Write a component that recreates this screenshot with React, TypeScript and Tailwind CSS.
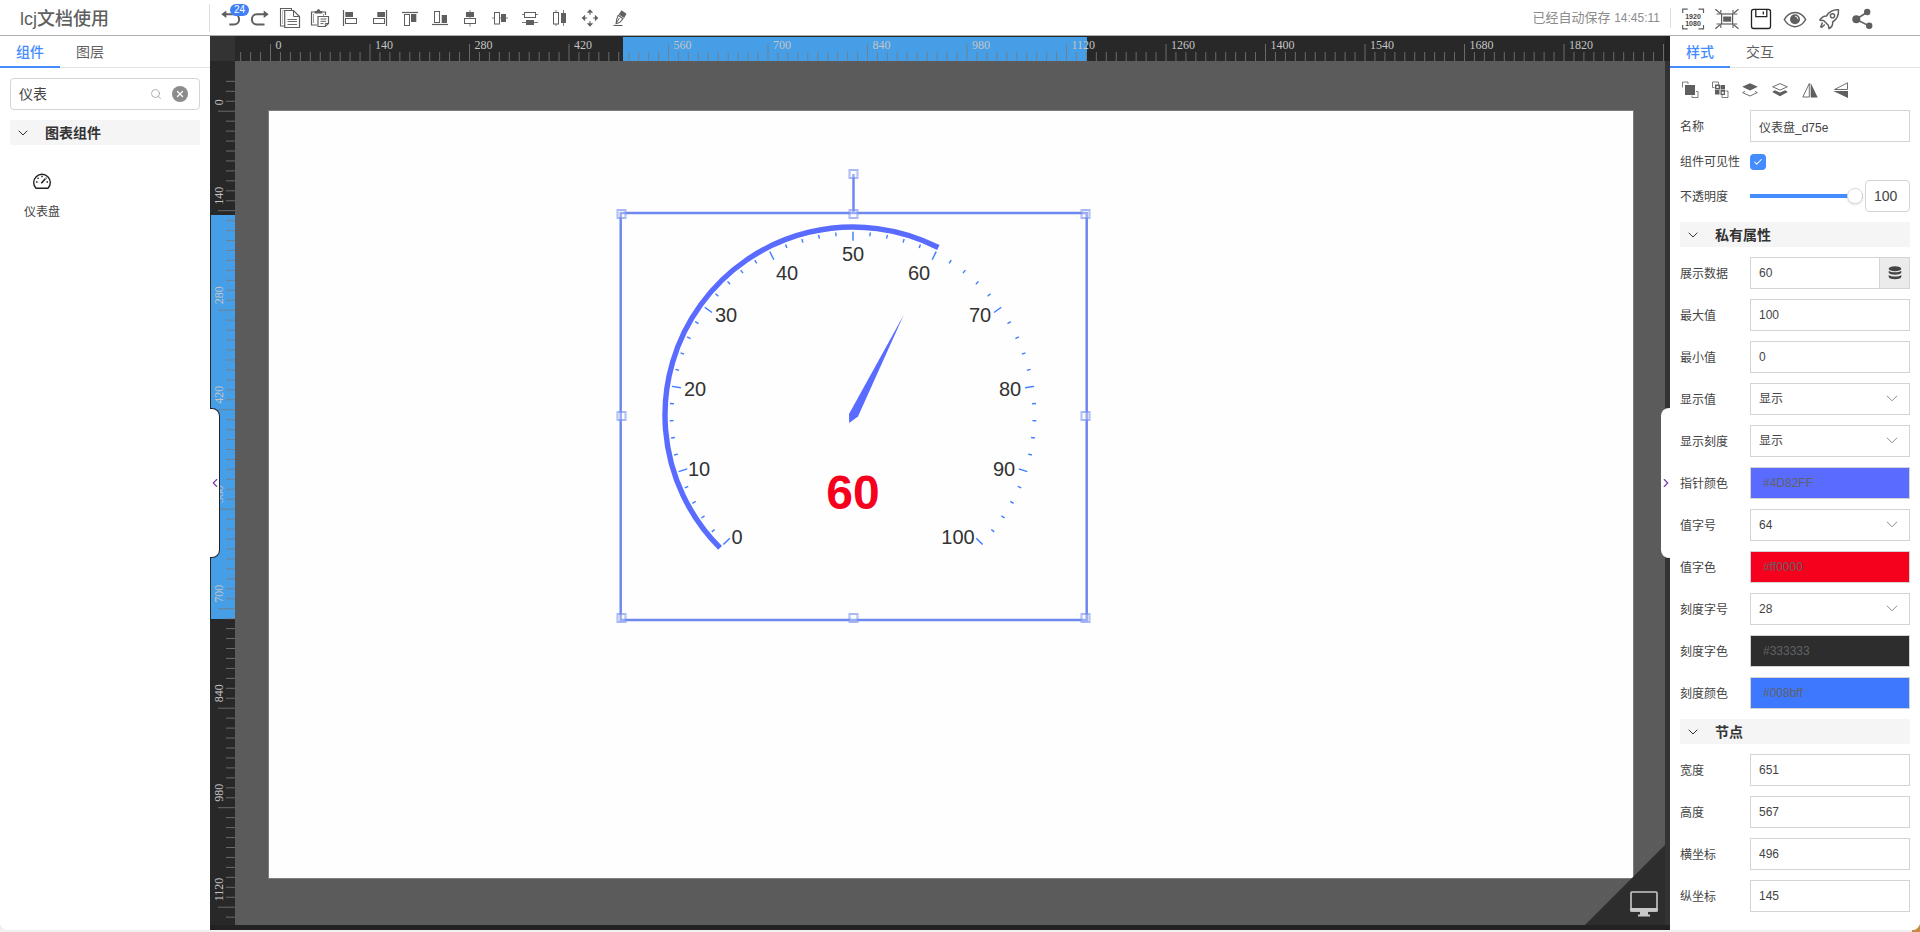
import React, { useState } from "react";
import { Check, ChevronDown, ChevronLeft, ChevronRight, Search, X } from "lucide-react";

const INK = "#5f5f5f";

interface IconProps {
  children: React.ReactNode;
}

/* ---------- toolbar icons, drawn on a 30x35 cell ---------- */

const ToolIcon: React.FC<IconProps> = ({ children }) => (
  <svg width="30" height="35" viewBox="0 0 30 35" fill="none" stroke={INK} strokeWidth="1">
    {children}
  </svg>
);

const tools = [
  {
    label: "撤销",
    icon: (
      <>
        <path d="M9 14.3h10a5 5 0 0 1 0 10.2h-4.7" strokeWidth="2" />
        <path d="M6.3 14.3l5-3.8v7.6z" fill={INK} stroke="none" />
      </>
    ),
  },
  {
    label: "重做",
    icon: (
      <>
        <path d="M21 14.3h-9a5 5 0 0 0 0 10.2h7.5" strokeWidth="2" />
        <path d="M23.7 14.3l-5-3.8v7.6z" fill={INK} stroke="none" />
      </>
    ),
  },
  {
    label: "复制",
    icon: (
      <>
        <path d="M16.5 10.5V8.5h-11v17.500h4" strokeWidth="1.1" />
        <path d="M7.5 24V10.500h2" strokeWidth="0.4" />
        <path d="M9.700 10.5h8.800l6 6v11h-14.800z" strokeWidth="1.2" />
        <path d="M18.5 10.5v6h6" />
        <path d="M12.500 19.500h9.500M12.500 21.500h9.500M12.500 24.500h9.500" strokeWidth="0.9" />
      </>
    ),
  },
  {
    label: "粘贴",
    icon: (
      <>
        <path d="M12 25H6.5V12h3M17.5 12h3v3" strokeWidth="1.2" />
        <path d="M8.5 23V14M18.5 14v2" strokeWidth="0.6" />
        <path d="M9.5 11h2.2c.2-2.4 3.4-2.4 3.6 0h2.2v2.5h-8z" fill={INK} stroke="none" />
        <path d="M13 16.5h10.5v7l-3.2 3H13z" strokeWidth="1.2" />
        <path d="M15.5 19h6M15.5 21.3h5.5M15.5 23.6h3M23.5 23.5h-3.2v3" />
      </>
    ),
  },
  {
    label: "左对齐",
    icon: (
      <>
        <path d="M8.5 10v16" strokeWidth="1.2" />
        <rect x="10.3" y="12" width="7.7" height="5" fill={INK} stroke="none" />
        <rect x="10.5" y="18.5" width="11" height="5" />
      </>
    ),
  },
  {
    label: "右对齐",
    icon: (
      <>
        <path d="M21.5 10v16" strokeWidth="1.2" />
        <rect x="12.3" y="12" width="7.7" height="5" fill={INK} stroke="none" />
        <rect x="8.5" y="18.5" width="11" height="5" />
      </>
    ),
  },
  {
    label: "顶部对齐",
    icon: (
      <>
        <path d="M7 12.5h16" strokeWidth="1.2" />
        <rect x="9.5" y="14.5" width="5" height="11" />
        <rect x="16" y="14" width="5.3" height="8" fill={INK} stroke="none" />
      </>
    ),
  },
  {
    label: "底部对齐",
    icon: (
      <>
        <path d="M7 24.5h16" strokeWidth="1.2" />
        <rect x="9.5" y="11.5" width="5" height="11" />
        <rect x="16.7" y="15" width="5.3" height="8" fill={INK} stroke="none" />
      </>
    ),
  },
  {
    label: "水平居中",
    icon: (
      <>
        <path d="M15 10v8M15 24v2.5" strokeWidth="0.8" />
        <rect x="11" y="12" width="8" height="5" fill={INK} stroke="none" />
        <rect x="9.5" y="18.5" width="11" height="5" />
      </>
    ),
  },
  {
    label: "垂直居中",
    icon: (
      <>
        <path d="M7 18h2.5M14.5 18H23" strokeWidth="0.8" />
        <rect x="9.5" y="12.5" width="5" height="11.5" />
        <rect x="16" y="14" width="5" height="8" fill={INK} stroke="none" />
      </>
    ),
  },
  {
    label: "垂直分布",
    icon: (
      <>
        <path d="M7 14.5h2.5M20.5 14.5H23M7 22.5h16" strokeWidth="0.8" />
        <rect x="9.5" y="12.5" width="11" height="5" />
        <rect x="11" y="20" width="8" height="5" fill={INK} stroke="none" />
      </>
    ),
  },
  {
    label: "水平分布",
    icon: (
      <>
        <path d="M11 10v2M11 24v2M18.5 10v16" strokeWidth="0.8" />
        <rect x="8.5" y="12.5" width="5" height="11.5" />
        <rect x="16" y="13" width="5" height="10" fill={INK} stroke="none" />
      </>
    ),
  },
  {
    label: "移动",
    icon: (
      <>
        <path d="M15 9.3l3.2 3.4h-6.4zM15 26.7l3.2-3.4h-6.4zM6.7 18l3.4-3.2v6.4zM23.3 18l-3.4-3.2v6.4z" fill={INK} stroke="none" />
        <path d="M15 12.5v2.2M15 21.3v2.2M10 18h2M18 18h2" strokeWidth="1.2" />
      </>
    ),
  },
  {
    label: "清空画布",
    icon: (
      <>
        <path d="M16.5 10.2l5 3.6-2.3 4.3-5.4-3.6z" fill={INK} stroke="none" />
        <path d="M13.2 15.3l4.8 3.4-3 3.7-3.8 1.2.4-4z" strokeWidth="1.1" />
        <path d="M14.5 18l-3.5 5.5M8.5 25.5h9" />
      </>
    ),
  },
];

/* ---------- icons on the right of the header, 34x35 cell ---------- */

const HeaderIcon: React.FC<IconProps> = ({ children }) => (
  <svg width="34" height="35" viewBox="0 0 34 35" fill="none" stroke={INK} strokeWidth="1.2">
    {children}
  </svg>
);

const actions = [
  {
    label: "画布尺寸",
    icon: (
      <>
        <path d="M6.7 13V9.2h5M22.5 9.2h5V13M6.7 25v3.8h5M22.5 28.8h5V25" />
        <g fill="#444" stroke="none" fontFamily="Liberation Sans, sans-serif" fontSize="7" fontWeight="bold" textAnchor="middle">
          <text x="17" y="18.5">1920</text>
          <text x="17" y="26">1080</text>
        </g>
      </>
    ),
  },
  {
    label: "适应屏幕",
    icon: (
      <>
        <rect x="11.6" y="14" width="11" height="10" />
        <rect x="13.2" y="16.5" width="8" height="5.2" fill={INK} stroke="none" />
        <path d="M5.3 9.2l4.8 4M28.5 9.2l-4.8 4M5.3 28.8l4.8-4M28.5 28.8l-4.8-4" />
        <path d="M10.8 10v4H6.5M23 10v4h4.3M10.8 28v-4H6.5M23 28v-4h4.3" strokeWidth="1.1" />
      </>
    ),
  },
  {
    label: "保存",
    icon: (
      <g stroke="#222" strokeWidth="1.3">
        <rect x="7.5" y="9.3" width="19" height="19.2" rx="2.2" />
        <path d="M11.8 9.5v7.2h11V9.5M19.3 11.5v3" />
      </g>
    ),
  },
  {
    label: "预览",
    icon: (
      <>
        <path d="M6.3 19.5C11.5 10 22.5 10 27.7 19.5C22.5 29 11.5 29 6.3 19.5z" strokeWidth="1.5" />
        <circle cx="17" cy="19.2" r="5" fill={INK} stroke="none" />
        <path d="M17 16.2a3 3 0 0 1 3 3" stroke="#fff" strokeWidth="0.9" />
      </>
    ),
  },
  {
    label: "发布",
    icon: (
      <>
        <path
          d="M26.5 9.8c-6-.4-9.5 2-12 6.2-2.6-.1-5 1.2-6.6 4.2l3.7.3 4.7 4.700.7 3.500c3-1.700 4-4 3.700-6.700 4-2.500 6.200-6 5.800-12.200z"
          strokeWidth="1.5"
          strokeLinejoin="round"
        />
        <circle cx="20.5" cy="15.8" r="2.1" strokeWidth="1.4" />
        <path d="M10.5 22.5l-2 5M12.8 24.5l-3.6 3.2" strokeWidth="1.5" />
      </>
    ),
  },
  {
    label: "分享",
    icon: (
      <>
        <path d="M10.5 19l11-7M10.5 19.5l12.5 6.3" strokeWidth="1.5" />
        <g fill={INK} stroke="none">
          <circle cx="10.3" cy="19.3" r="4" />
          <circle cx="21.2" cy="12" r="3.2" />
          <circle cx="23.2" cy="25.7" r="3.2" />
        </g>
      </>
    ),
  },
];

/* ---------- arrange icons in the style tab, 30x42 cell ---------- */

const arranges = [
  {
    label: "组合",
    icon: (
      <>
        <rect x="10" y="17" width="10" height="10" fill={INK} stroke="none" />
        <path d="M7.5 19.5V14H13v2M21 23.5h2v6h-6v-2" strokeWidth="0.8" />
      </>
    ),
  },
  {
    label: "取消组合",
    icon: (
      <>
        <path d="M10 16.5h5v5h-5zM15.5 17H20v4.5h-4.5zM10 22h4.5v4.5H10z" fill={INK} stroke="none" />
        <path d="M15.5 22H20v5h-4.5z" fill={INK} stroke="none" />
        <path d="M11.5 18h2v2h-2zM16.8 23.8h2v2h-2z" fill="#fff" stroke="none" />
        <path d="M7.5 19.5V14h6v2.500M7.5 19.5h2M20.5 23H23v6.5h-6V27" strokeWidth="0.8" />
      </>
    ),
  },
  {
    label: "置顶",
    icon: (
      <>
        <path d="M15 15.3l7.8 3.5-7.8 3.7-7.8-3.7z" fill={INK} stroke="none" />
        <path d="M10 23.3l-2.3 1.3L15 28l7.3-3.4-2.3-1.3" strokeWidth="0.9" />
      </>
    ),
  },
  {
    label: "置底",
    icon: (
      <>
        <path d="M15 15.6l7.3 3.2-7.3 3.3-7.3-3.3z" strokeWidth="0.9" />
        <path d="M9.8 22.3L15 24.6l5.2-2.3 2.6 1.8-7.8 4.2-7.8-4.2z" fill={INK} stroke="none" />
      </>
    ),
  },
  {
    label: "水平翻转",
    icon: (
      <>
        <path d="M14.3 15.5V29H7.8z" strokeWidth="0.9" />
        <path d="M15.7 15v14.6h7z" fill={INK} stroke="none" />
      </>
    ),
  },
  {
    label: "垂直翻转",
    icon: (
      <>
        <path d="M22.5 14.8v6.7h-13z" strokeWidth="0.9" />
        <path d="M23 23v7L8.3 23z" fill={INK} stroke="none" />
      </>
    ),
  },
];

/* ---------- rulers ---------- */

const TICK_GAP = 9.95;
const makeTicks = (last: number) => Array.from({ length: last + 4 }, (_, i) => i - 3);

const HorizontalRuler = () => (
  <svg className="h-[25px] min-w-0 flex-1 bg-[#282828]" width="100%" height="25">
    <rect x="388" y="1" width="464" height="24" fill="#469ee6" />
    {makeTicks(139).map((i) => {
      const x = 35.5 + i * TICK_GAP;
      const major = i >= 0 && i % 10 === 0;
      return (
        <g key={i}>
          <path d={`M${x} ${major ? 8 : 16}V25`} stroke="#7a7a7a" strokeOpacity="0.8" />
          {major && (
            <text x={x + 5} y="13" fill="#c4c4c4" fontSize="12" fontFamily="Liberation Serif, serif">
              {i * 14}
            </text>
          )}
        </g>
      );
    })}
    <path d="M1428.500 8V25" stroke="#7a7a7a" strokeOpacity="0.8" />
  </svg>
);

const VerticalRuler = () => (
  <svg className="w-[25px] shrink-0 bg-[#282828]" width="25" height="100%">
    <rect x="1" y="154" width="24" height="404" fill="#469ee6" />
    {makeTicks(81).map((i) => {
      const y = 50.2 + i * TICK_GAP;
      const major = i >= 0 && i % 10 === 0;
      return (
        <g key={i}>
          <path d={`M${major ? 8 : 16} ${y}H25`} stroke="#7a7a7a" strokeOpacity="0.8" />
          {major && (
            <text
              transform={`translate(13 ${y - 6}) rotate(-90)`}
              fill="#c4c4c4"
              fontSize="12"
              fontFamily="Liberation Serif, serif"
            >
              {i * 14}
            </text>
          )}
        </g>
      );
    })}
  </svg>
);

/* ---------- gauge ---------- */

const CX = 233;
const CY = 203;

const polar = (r: number, value: number) => {
  const a = ((225 - value * 2.7) * Math.PI) / 180;
  return { x: CX + r * Math.cos(a), y: CY - r * Math.sin(a) };
};

const scaleLabels = [
  { value: 0, x: 117, y: 332 },
  { value: 10, x: 79, y: 264 },
  { value: 20, x: 75, y: 184 },
  { value: 30, x: 106, y: 110 },
  { value: 40, x: 167, y: 68 },
  { value: 50, x: 233, y: 49 },
  { value: 60, x: 299, y: 68 },
  { value: 70, x: 360, y: 110 },
  { value: 80, x: 390, y: 184 },
  { value: 90, x: 384, y: 264 },
  { value: 100, x: 338, y: 332 },
];

const handles = [
  [1.5, 2],
  [233.5, 2],
  [465.5, 2],
  [1.5, 204],
  [465.5, 204],
  [1.5, 406],
  [233.5, 406],
  [465.5, 406],
  [233.5, -38],
];

const Gauge = ({ value }: { value: number }) => {
  const from = polar(188, 0);
  const to = polar(188, value);
  return (
    <svg className="absolute left-[351px] top-[101px] overflow-visible" width="468" height="409" viewBox="0 0 468 409">
      <path
        d={`M${from.x} ${from.y}A188 188 0 0 1 ${to.x} ${to.y}`}
        fill="none"
        stroke="#596cff"
        strokeWidth="5.4"
      />
      {Array.from({ length: 51 }, (_, i) => {
        const a = polar(183.3, i * 2);
        const b = polar(i % 5 === 0 ? 174.3 : 179.5, i * 2);
        return <path key={i} d={`M${a.x} ${a.y}L${b.x} ${b.y}`} stroke="#3d7bff" strokeWidth="1.4" />;
      })}
      <g fill="#333" fontSize="20" fontFamily="Liberation Sans, sans-serif" textAnchor="middle">
        {scaleLabels.map((l) => (
          <text key={l.value} x={l.x} y={l.y}>
            {l.value}
          </text>
        ))}
      </g>
      <path d="M283.7 103L238 204.5L229.2 211L229 202z" fill="#596cff" />
      <text
        x={CX}
        y="297"
        fill="#f5001d"
        fontSize="48"
        fontWeight="bold"
        fontFamily="Liberation Sans, sans-serif"
        textAnchor="middle"
      >
        {value}
      </text>
      <g fill="none" stroke="#6f88ef">
        <rect x="0.7" y="1" width="466" height="407" strokeWidth="2.5" />
        <path d="M233.5 -38V1" strokeWidth="2.5" />
        {handles.map(([x, y]) => (
          <g key={`${x},${y}`}>
            <rect x={x - 4.5} y={y - 4.5} width="9" height="9" strokeOpacity="0.6" fill="#fff" fillOpacity="0.3" />
            <rect x={x - 3.5} y={y - 3.5} width="7" height="7" strokeOpacity="0.6" />
          </g>
        ))}
      </g>
    </svg>
  );
};

/* ---------- panel parts ---------- */

interface TabsProps {
  items: string[];
}

const Tabs: React.FC<TabsProps> = ({ items }) => {
  const [active, setActive] = useState(items[0]);
  return (
    <div className="flex h-8 shrink-0 border-b border-[#e4e4e4]">
      {items.map((item) => (
        <button
          key={item}
          type="button"
          onClick={() => setActive(item)}
          className={`h-8 w-[60px] border-b-2 pt-0.5 text-sm ${
            item === active ? "border-[#458cff] font-medium text-[#458cff]" : "border-transparent text-[#606060]"
          }`}
        >
          {item}
        </button>
      ))}
    </div>
  );
};

const SectionTitle = ({ title }: { title: string }) => (
  <h2 className="flex h-[25px] items-center gap-[14px] bg-[#f5f5f5] px-[5px] text-sm font-bold text-[#333]">
    <ChevronDown size={16} strokeWidth={1.5} />
    {title}
  </h2>
);

interface FieldProps {
  id: string;
  label: string;
  value: string;
}

const labelClass = "w-[70px] shrink-0 pt-0.5 text-xs text-[#444]";
const inputClass = "h-8 w-full min-w-0 border border-[#d4d4d4] bg-white px-2 text-xs text-[#444] outline-none";

const TextField: React.FC<FieldProps> = ({ id, label, value }) => (
  <div className="flex items-center">
    <label htmlFor={id} className={labelClass}>
      {label}
    </label>
    <input id={id} defaultValue={value} className={inputClass} />
  </div>
);

const SelectField: React.FC<FieldProps> = ({ id, label, value }) => (
  <div className="flex items-center">
    <label htmlFor={id} className={labelClass}>
      {label}
    </label>
    <div className="relative flex-1">
      <select id={id} defaultValue={value} className={`${inputClass} appearance-none rounded-none`}>
        <option>{value}</option>
      </select>
      <svg
        width="12"
        height="7"
        viewBox="0 0 12 7"
        fill="none"
        stroke="#888"
        className="pointer-events-none absolute right-3 top-3"
      >
        <path d="M1 .8l5 5 5-5" />
      </svg>
    </div>
  </div>
);

const ColorField: React.FC<FieldProps & { swatch: string }> = ({ id, label, value, swatch }) => (
  <div className="flex items-center">
    <label htmlFor={id} className={labelClass}>
      {label}
    </label>
    <input
      id={id}
      defaultValue={value}
      className={`h-8 w-full min-w-0 border border-[#d4d4d4] px-3 text-xs text-[#606266] outline-none ${swatch}`}
    />
  </div>
);

const Header = () => (
  <header className="flex h-9 shrink-0 items-center border-b border-[#adadad] bg-white">
    <h1 className="w-[209px] pl-5 pt-0.5 text-lg leading-7 font-medium text-[#5f5f5f]">lcj文档使用</h1>
    <div className="h-7 w-px bg-[#dcdcdc]" />
    <div className="flex flex-1 pl-[5px]">
      {tools.map((tool, i) => (
        <button key={tool.label} type="button" aria-label={tool.label} className="relative">
          <ToolIcon>{tool.icon}</ToolIcon>
          {i === 0 && (
            <span className="absolute left-[15px] top-1 h-3 w-[19px] rounded-full bg-[#4080f7] text-center text-[10px] leading-3 text-white">
              24
            </span>
          )}
        </button>
      ))}
    </div>
    <p className="pr-[10px] text-[13px] text-[#8c8c8c]">
      已经自动保存 <time className="text-xs">14:45:11</time>
    </p>
    <div className="flex w-[250px] items-center">
      <div className="h-5 w-px bg-[#dcdcdc]" />
      <div className="flex pl-[5px]">
        {actions.map((action) => (
          <button key={action.label} type="button" aria-label={action.label}>
            <HeaderIcon>{action.icon}</HeaderIcon>
          </button>
        ))}
      </div>
    </div>
  </header>
);

const ComponentPanel = () => (
  <aside className="flex w-[210px] shrink-0 flex-col bg-white">
    <Tabs items={["组件", "图层"]} />
    <div className="flex flex-col gap-[10px] p-[10px]">
      <div className="flex h-8 items-center rounded-sm border border-[#d4d4d4] px-2">
        <input
          aria-label="搜索组件"
          defaultValue="仪表"
          className="min-w-0 flex-1 text-sm text-[#444] outline-none"
        />
        <Search size={12} strokeWidth={1.5} className="text-[#999]" />
        <button
          type="button"
          aria-label="清除"
          className="ml-[10px] mr-[3px] flex size-4 items-center justify-center rounded-full bg-[#8c8c8c] text-white"
        >
          <X size={10} strokeWidth={3} />
        </button>
      </div>
      <SectionTitle title="图表组件" />
      <button type="button" className="flex w-16 flex-col items-center gap-[13px] pt-4 text-xs text-[#444]">
        <svg width="20" height="20" viewBox="0 0 20 20" fill="none" stroke="#222" strokeWidth="1.4">
          <path d="M4 17.3a8.300 8.300 0 1 1 12 0z" strokeLinejoin="round" />
          <path d="M9.3 12.3l4-4.5" strokeWidth="1.6" />
          <path d="M4 11h1.5M14.5 11H16M10 4.8v1.4M5.6 6.800l1 1M14.4 6.8l-.6.6" />
        </svg>
        仪表盘
      </button>
    </div>
  </aside>
);

const Stage = () => (
  <main className="relative flex min-w-0 flex-1 flex-col bg-[#222]">
    <div className="flex pr-[5px]">
      <div className="size-[25px] shrink-0 bg-[#333]" />
      <HorizontalRuler />
    </div>
    <div className="flex min-h-0 flex-1 bg-[#333] pr-[5px]">
      <VerticalRuler />
      <div className="relative flex min-w-0 flex-1 overflow-hidden bg-[#5b5b5b] pb-[47px] pl-[34px] pr-8 pt-[50px]">
        <div className="relative flex-1 bg-[#fefefe] outline outline-[#7d7d7d]">
          <Gauge value={60} />
        </div>
        <button type="button" aria-label="全屏" className="absolute bottom-0 right-0">
          <svg width="80" height="80" viewBox="0 0 80 80">
            <path d="M80 0v80H0z" fill="#2d2d2d" />
            <rect x="46" y="47" width="26" height="19" rx="1" fill="none" stroke="#c8c8c8" strokeWidth="1.6" />
            <path d="M45.3 63h27.400v3.800H45.300zM55 66.500h8v3h2v2H53v-2h2z" fill="#c8c8c8" />
          </svg>
        </button>
      </div>
    </div>
    <div className="h-[5px] shrink-0" />
    <button
      type="button"
      aria-label="收起左侧面板"
      className="absolute left-0 top-1/2 flex h-[150px] w-[10px] -translate-y-1/2 items-center justify-center rounded-r-lg border border-l-0 border-[#222] bg-white text-[#7a3fa8]"
    >
      <ChevronLeft size={14} strokeWidth={2} className="shrink-0" />
    </button>
    <button
      type="button"
      aria-label="收起右侧面板"
      className="absolute right-0 top-1/2 flex h-[150px] w-[9px] -translate-y-1/2 items-center justify-center rounded-l-lg bg-white text-[#7a3fa8]"
    >
      <ChevronRight size={14} strokeWidth={2} className="shrink-0" />
    </button>
  </main>
);

const StylePanel = () => (
  <aside className="flex w-[250px] shrink-0 flex-col bg-white">
    <Tabs items={["样式", "交互"]} />
    <div className="flex h-[42px] shrink-0 pl-[5px]">
      {arranges.map((item) => (
        <button key={item.label} type="button" aria-label={item.label}>
          <svg width="30" height="42" viewBox="0 0 30 42" fill="none" stroke={INK}>
            {item.icon}
          </svg>
        </button>
      ))}
    </div>
    <form className="flex flex-col gap-[10px] px-[10px]">
      <TextField id="name" label="名称" value="仪表盘_d75e" />
      <div className="flex h-[18px] items-center">
        <label htmlFor="visible" className={labelClass}>
          组件可见性
        </label>
        <div className="relative mt-0.5 size-4">
          <input
            id="visible"
            type="checkbox"
            defaultChecked
            className="block size-4 appearance-none rounded-sm bg-white checked:bg-[#458cff]"
          />
          <Check
            size={10}
            strokeWidth={2.5}
            className="pointer-events-none absolute left-[3px] top-[3px] text-white"
          />
        </div>
      </div>
      <div className="flex items-center">
        <label htmlFor="opacity" className={labelClass}>
          不透明度
        </label>
        <input
          id="opacity"
          type="range"
          defaultValue={100}
          className="mr-0.5 h-4 min-w-0 flex-1 appearance-none bg-transparent [&::-webkit-slider-runnable-track]:h-1 [&::-webkit-slider-runnable-track]:bg-[#458cff] [&::-webkit-slider-thumb]:-mt-1.5 [&::-webkit-slider-thumb]:size-4 [&::-webkit-slider-thumb]:appearance-none [&::-webkit-slider-thumb]:rounded-full [&::-webkit-slider-thumb]:border [&::-webkit-slider-thumb]:border-[#dcdcdc] [&::-webkit-slider-thumb]:bg-white [&::-webkit-slider-thumb]:shadow"
        />
        <input
          aria-label="不透明度数值"
          defaultValue="100"
          className="h-8 w-[45px] rounded-sm border border-[#d4d4d4] px-2 text-sm text-[#444] outline-none"
        />
      </div>
      <SectionTitle title="私有属性" />
      <div className="flex items-center">
        <label htmlFor="data" className={labelClass}>
          展示数据
        </label>
        <input id="data" defaultValue="60" className={inputClass} />
        <button
          type="button"
          aria-label="数据源"
          className="flex h-8 w-[30px] shrink-0 items-center justify-center border border-l-0 border-[#d4d4d4] bg-[#ebebeb]"
        >
          <svg width="14" height="14" viewBox="0 0 14 14" fill="#444">
            <ellipse cx="7" cy="2.8" rx="6.3" ry="2.5" />
            <path d="M.7 4.8c2.5 2 10.1 2 12.6 0v2c-1 2.5-11.6 2.5-12.6 0z" />
            <path d="M.7 9c2.5 2 10.1 2 12.6 0v2c-1 3-11.6 3-12.6 0z" />
          </svg>
        </button>
      </div>
      <TextField id="max" label="最大值" value="100" />
      <TextField id="min" label="最小值" value="0" />
      <SelectField id="show-value" label="显示值" value="显示" />
      <SelectField id="show-scale" label="显示刻度" value="显示" />
      <ColorField id="pointer-color" label="指针颜色" value="#4D82FF" swatch="bg-[#596cff]" />
      <SelectField id="value-size" label="值字号" value="64" />
      <ColorField id="value-color" label="值字色" value="#ff0000" swatch="bg-[#f5001d]" />
      <SelectField id="scale-size" label="刻度字号" value="28" />
      <ColorField id="scale-text-color" label="刻度字色" value="#333333" swatch="bg-[#2d2d2d]" />
      <ColorField id="scale-color" label="刻度颜色" value="#008bff" swatch="bg-[#3d78ff]" />
      <SectionTitle title="节点" />
      <TextField id="width" label="宽度" value="651" />
      <TextField id="height" label="高度" value="567" />
      <TextField id="pos-x" label="横坐标" value="496" />
      <TextField id="pos-y" label="纵坐标" value="145" />
    </form>
  </aside>
);

export default function App() {
  return (
    <div className="relative h-screen overflow-hidden bg-[#f0f0f0] pb-0.5 font-['Liberation_Sans','Noto_Sans_CJK_SC',sans-serif]">
      <span className="absolute bottom-0 right-0 size-2 bg-[#c98a45]" />
      <div className="relative flex h-full flex-col overflow-hidden rounded-b-lg bg-white">
        <Header />
        <div className="flex min-h-0 flex-1">
          <ComponentPanel />
          <Stage />
          <StylePanel />
        </div>
      </div>
    </div>
  );
}
